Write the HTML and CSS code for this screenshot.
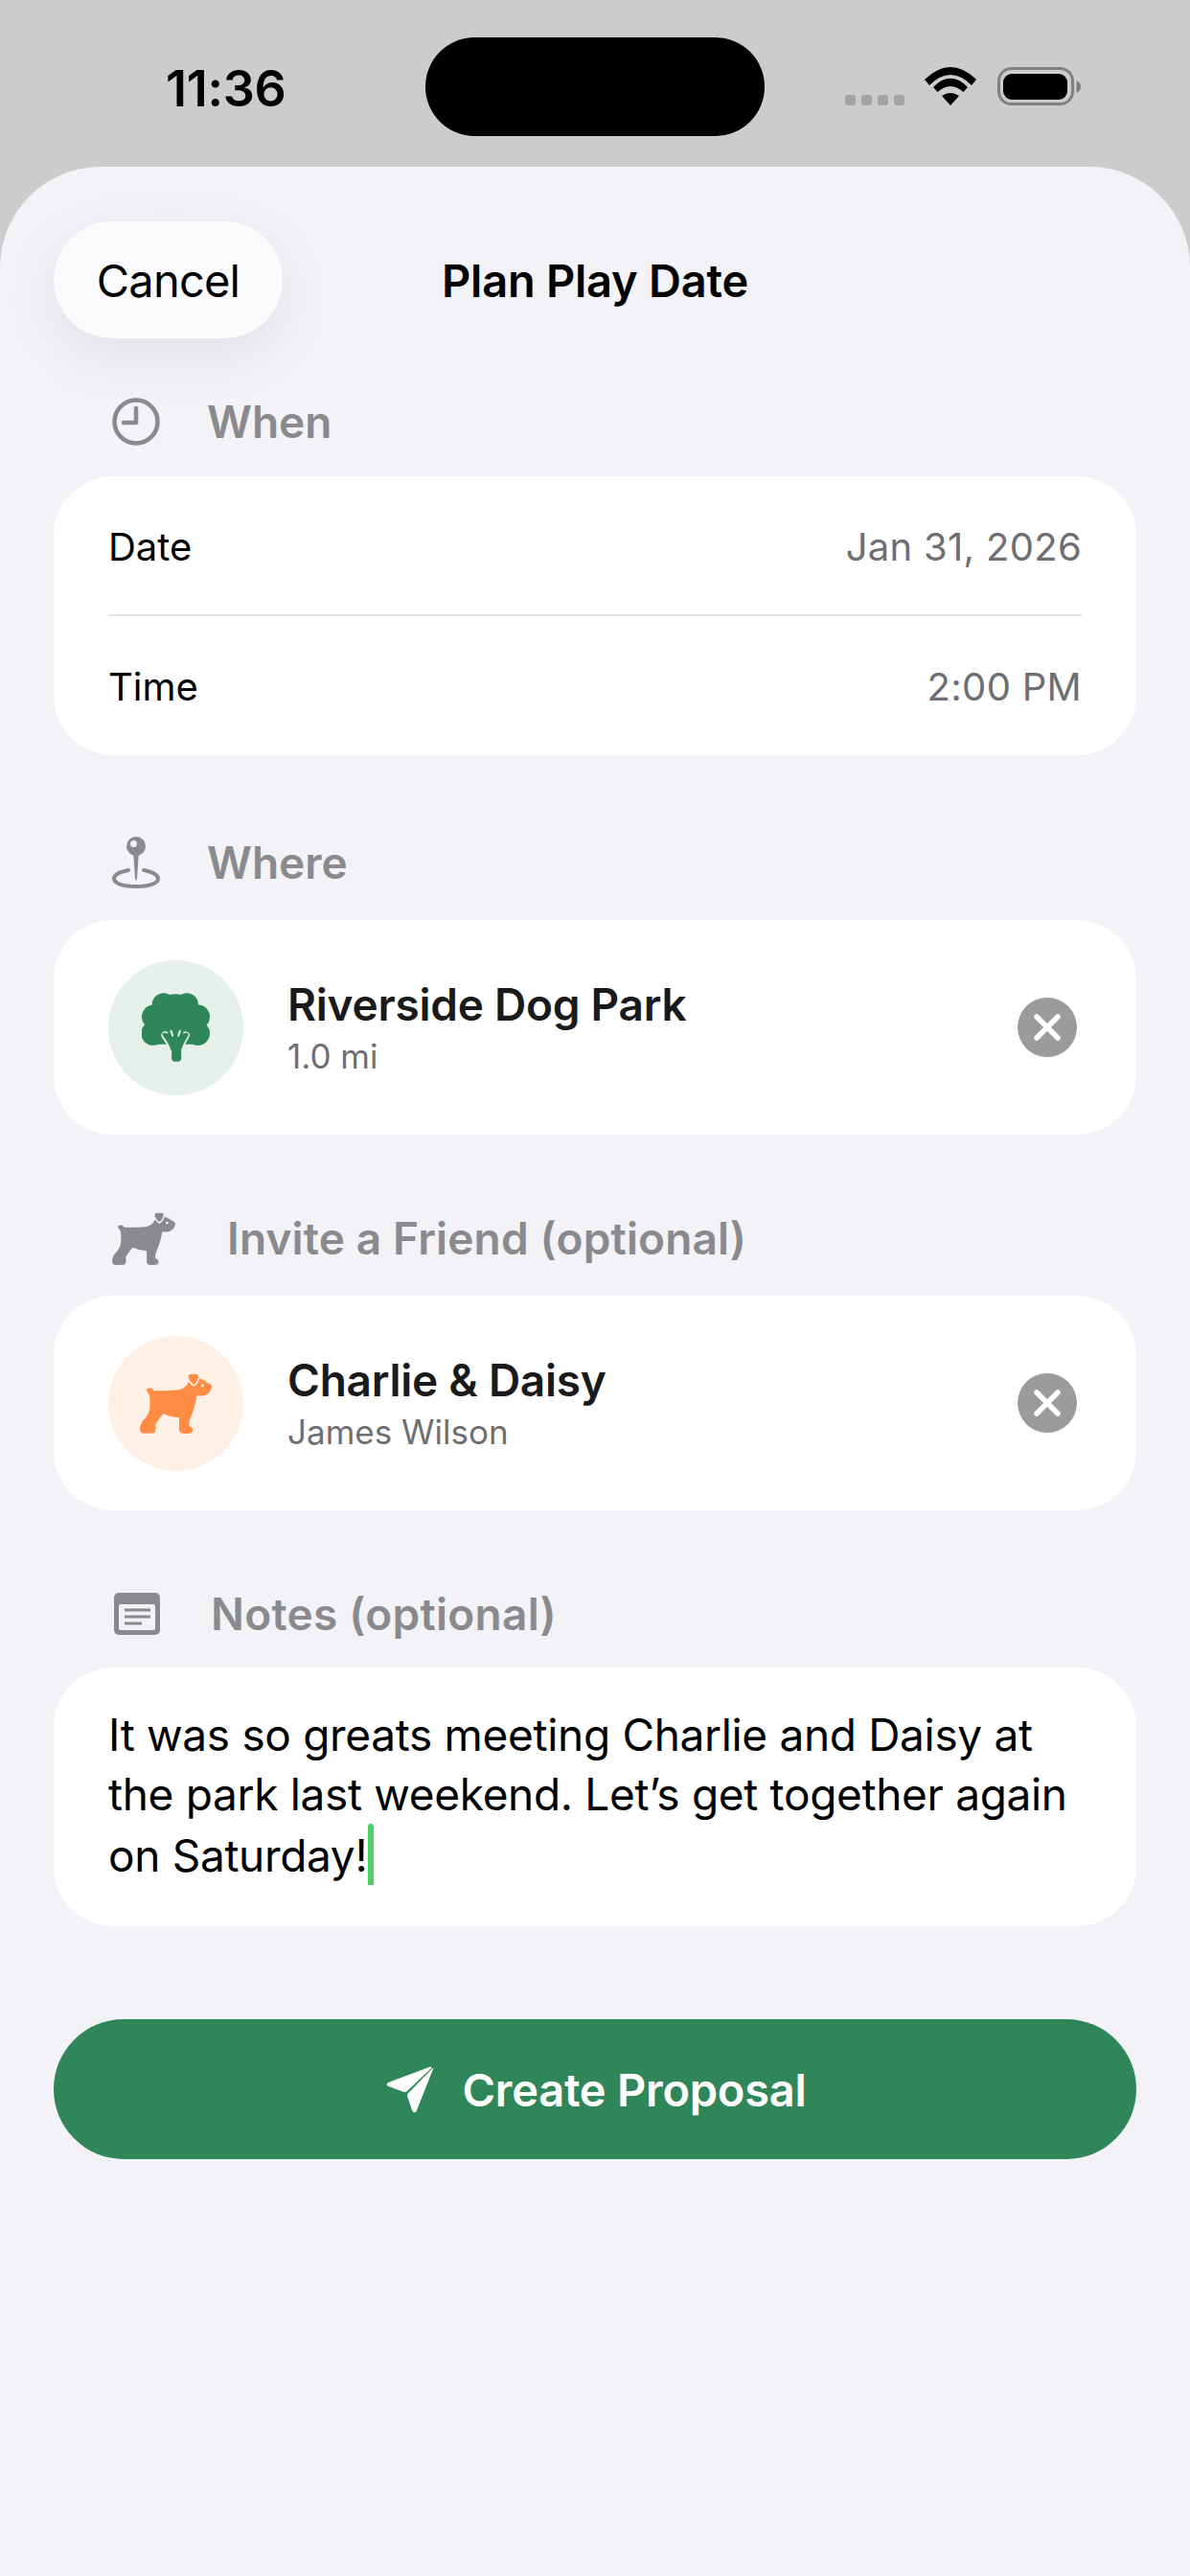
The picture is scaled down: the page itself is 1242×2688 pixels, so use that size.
FILE: index.html
```html
<!DOCTYPE html>
<html lang="en">
<head>
  <meta charset="UTF-8">
  <title>Plan Play Date</title>
  <link rel="stylesheet" href="styles.css">
</head>
<body>
  <svg class="defs" width="0" height="0">
    <!-- dog, drawn once and reused for the heading and the friend avatar -->
    <symbol id="dog" viewBox="197 552 225 188">
      <path fill="currentColor" d="M218 606 Q216 597 228 597 Q238 598 240 606 Q290 606 320 603 Q342 598 350 578 L385 568 Q398 572 410 582 Q424 586 422 596 Q416 620 392 622 L375 622 Q372 650 358 684 Q350 702 350 714 L360 722 Q366 734 358 738 Q345 741 332 740 Q320 738 320 726 L320 690 Q292 688 270 678 Q256 694 245 712 Q250 734 240 739 L208 740 Q196 738 197 724 Q198 708 212 694 Q226 680 228 660 Q230 630 226 618 Z"/>
      <path fill="currentColor" stroke="var(--ear, #fff)" stroke-width="5" d="M355 552 L374 552 Q384 553 382 566 Q378 582 366 590 Q352 582 347 566 Q345 553 355 552 Z"/>
      <circle cx="393" cy="590" r="4.5" fill="var(--ear, #fff)"/>
    </symbol>
    <symbol id="close" viewBox="0 0 62 62">
      <circle cx="31" cy="31" r="31" fill="#9b9b9b"/>
      <path d="M20 20 L42 42 M42 20 L20 42" stroke="#fff" stroke-width="5.5" stroke-linecap="round"/>
    </symbol>
  </svg>

  <div class="status-bar">
    <span class="clock">11:36</span>
    <div class="island"></div>
    <div class="status-icons">
      <div class="signal"><i></i><i></i><i></i><i></i></div>
      <svg class="wifi" width="54" height="40" viewBox="0 0 54 40">
        <path d="M27 40 L18 30 Q27 24 36 30 Z"/>
        <path d="M9 21 L13.500 26 Q27 14 40.500 26 L45 21 Q27 2.500 9 21 Z"/>
        <path d="M0 13 L5 19 Q27 -3 49 19 L54 13 Q27 -13 0 13 Z"/>
      </svg>
      <svg class="battery" width="87" height="40" viewBox="0 0 87 40">
        <rect x="1.500" y="1.500" width="77" height="37" rx="13" fill="none" stroke="#808080" stroke-width="3"/>
        <rect x="6" y="7" width="67" height="27" rx="9" fill="#000"/>
        <path d="M82.500 14 Q87 16 87 20.500 Q87 25 82.500 27 Z" fill="#808080"/>
      </svg>
    </div>
  </div>

  <main class="sheet">
    <header class="sheet-head">
      <button class="cancel">Cancel</button>
      <h1 class="title">Plan Play Date</h1>
      <span></span>
    </header>

    <section class="group group-when">
      <h2 class="group-label">
        <svg width="50" height="50" viewBox="0 0 50 50" fill="none" stroke="#8a8a8e" stroke-width="4.500">
          <circle cx="25" cy="25" r="22.500"/>
          <path d="M25 11 V26 H12" stroke-linecap="round" stroke-linejoin="round"/>
        </svg>
        When
      </h2>
      <div class="card rows">
        <div class="row"><span>Date</span><span class="row-value">Jan 31, 2026</span></div>
        <div class="row"><span>Time</span><span class="row-value">2:00 PM</span></div>
      </div>
    </section>

    <section class="group group-where">
      <h2 class="group-label">
        <svg width="50" height="54" viewBox="0 0 50 54">
          <path d="M17 35 C7 37 2 40 2 44 C2 49 12 52 25 52 C38 52 48 49 48 44 C48 40 43 37 33 35" fill="none" stroke="#8a8a8e" stroke-width="4" stroke-linecap="round"/>
          <path d="M22 14 H28 L26 44 Q25 47 24 44 Z" fill="#8a8a8e"/>
          <circle cx="25" cy="10" r="10" fill="#8a8a8e"/>
          <circle cx="22.500" cy="7.500" r="3.500" fill="#f2f2f7"/>
        </svg>
        Where
      </h2>
      <div class="card item">
        <div class="avatar avatar-green">
          <svg width="71" height="72" viewBox="55 52 212 214">
            <g fill="#2e8659">
              <circle cx="123" cy="88" r="36"/>
              <circle cx="195" cy="88" r="36"/>
              <circle cx="92" cy="126" r="37"/>
              <circle cx="230" cy="126" r="37"/>
              <circle cx="90" cy="178" r="37"/>
              <circle cx="230" cy="178" r="37"/>
              <circle cx="160" cy="130" r="75"/>
              <path d="M105 150 H215 V212 H105 Z"/>
            </g>
            <g fill="none" stroke="#e5f0ea" stroke-linecap="round">
              <path d="M128 184 Q145 205 151 228 M192 184 Q178 205 172 228" stroke-width="24"/>
              <path d="M163 232 V262" stroke-width="42"/>
            </g>
            <g fill="#2e8659">
              <path d="M128 178 H192 L176 224 H148 Z"/>
              <path d="M148 216 H178 V256 Q178 266 163 266 Q148 266 148 256 Z"/>
            </g>
            <path d="M126 182 Q145 205 151 226 M194 182 Q178 205 172 226" fill="none" stroke="#2e8659" stroke-width="13" stroke-linecap="round"/>
            <path d="M146 170 L151 185 M174 170 L169 185" fill="none" stroke="#e5f0ea" stroke-width="6" stroke-linecap="round"/>
          </svg>
        </div>
        <div class="item-text">
          <div class="item-name">Riverside Dog Park</div>
          <div class="item-sub">1.0 mi</div>
        </div>
        <svg class="remove" width="62" height="62"><use href="#close"/></svg>
      </div>
    </section>

    <section class="group">
      <h2 class="group-label group-label-dog">
        <svg class="dog-grey" width="66" height="55"><use href="#dog"/></svg>
        Invite a Friend (optional)
      </h2>
      <div class="card item">
        <div class="avatar avatar-orange">
          <svg class="dog-orange" width="75" height="63"><use href="#dog"/></svg>
        </div>
        <div class="item-text">
          <div class="item-name">Charlie &amp; Daisy</div>
          <div class="item-sub">James Wilson</div>
        </div>
        <svg class="remove" width="62" height="62"><use href="#close"/></svg>
      </div>
    </section>

    <section class="group group-notes">
      <h2 class="group-label group-label-notes">
        <svg width="48" height="44" viewBox="0 0 48 44">
          <rect width="48" height="44" rx="5" fill="#8a8a8e"/>
          <rect x="5" y="12" width="38" height="27" rx="2" fill="#f2f2f7"/>
          <path d="M11 18 H38 M11 25 H38 M11 32 H29" stroke="#8a8a8e" stroke-width="3"/>
        </svg>
        Notes (optional)
      </h2>
      <div class="card notes">It was so greats meeting Charlie and Daisy at the park last weekend. Let’s get together again on Saturday!<span class="caret"></span></div>
    </section>

    <button class="submit">
      <svg width="50" height="49" viewBox="73 85 150 147">
        <path d="M210 87 Q216 86 214 92 L138 164 Q133 168 127 165 L80 148 Q70 143 80 136 Z" fill="#fff"/>
        <path d="M221 92 Q222 88 218 92 L142 170 Q138 175 140 181 L155 225 Q161 235 168 225 Z" fill="#fff"/>
      </svg>
      Create Proposal
    </button>
  </main>
</body>
</html>
```

FILE: styles.css
```css
/* Reset + base */
* { margin:0; padding:0; box-sizing:border-box; }
html, body { height:100%; }
body {
  width:1242px; height:2688px;
  background:#ccc; color:#000;
  font-family:Inter, "Liberation Sans", sans-serif;
  overflow:hidden;
}
.defs { display:block; }

/* Status bar */
.status-bar {
  height:174px;
  padding:39px 0 0 173px;
  display:flex;
  align-items:flex-start;
}
.clock {
  width:271px;
  margin-top:26px;
  font-size:52px; font-weight:600; line-height:56px;
  letter-spacing:-0.3px;
}
.island { width:354px; height:103px; border-radius:52px; background:#000; }
.status-icons {
  margin-left:84px; margin-top:31px;
  display:flex; align-items:flex-start;
}
.signal { display:flex; gap:6.500px; margin-top:29px; margin-right:21px; }
.signal i { width:10.500px; height:11px; border-radius:3px; background:#a3a3a3; }
.wifi { margin-right:22px; }
.battery { display:block; }

/* Sheet */
.sheet {
  height:2514px;
  padding:57px 56px 0;
  background:#f2f2f7;
  border-radius:105px 105px 0 0;
}
.sheet-head {
  display:grid;
  grid-template-columns:1fr auto 1fr;
  align-items:center;
}
.cancel {
  width:239px; height:122px;
  border:none; border-radius:61px;
  background:#fbfbfe;
  box-shadow:0 18px 60px rgba(0,0,0,0.07);
  font:400 47px Inter, "Liberation Sans", sans-serif;
  letter-spacing:-0.8px;
  color:#000;
}
.title { font-size:47px; font-weight:600; white-space:nowrap; letter-spacing:-0.25px; }

/* Groups */
.group { margin-top:80px; }
.group-when { margin-top:59px; }
.group-where { margin-top:84px; }
.group-label {
  height:56px;
  margin-bottom:32px;
  padding-left:61px;
  display:flex; align-items:center; gap:49px;
  font-size:46px; font-weight:600;
  color:#8a8a8e;
}
.group-when .group-label { margin-bottom:29px; }
.group-label-dog { gap:54px; letter-spacing:0.15px; --ear:#f2f2f7; }
.group-label-notes { gap:53px; padding-left:63px; letter-spacing:0.25px; }
.group-notes .group-label { margin-bottom:28px; }

.card { background:#fff; border-radius:62px; }

/* Date + time rows */
.rows { padding:0 57px; }
.row {
  height:147px;
  padding-top:2px;
  display:flex; justify-content:space-between; align-items:center;
  font-size:40px;
}
.row:first-child { height:144px; padding-top:3px; }
.row + .row { border-top:2px solid #e2e2e4; }
.row-value { color:#6e6e73; letter-spacing:0.3px; }

/* Place + friend cards */
.item {
  height:224px;
  padding:0 62px 0 57px;
  display:flex; align-items:center;
}
.avatar {
  width:141px; height:141px;
  border-radius:50%;
  display:flex; align-items:center; justify-content:center;
}
.avatar-green { background:#e5f0ea; }
.avatar-orange { background:#fff0e6; color:#ff8c42; --ear:#fff0e6; }
.item-text { flex:1; margin-left:46px; }
.item-name { font-size:46px; font-weight:600; color:#1a1a1a; line-height:56px; letter-spacing:-0.25px; }
.item-sub { margin-top:3px; font-size:35px; color:#6e6e73; line-height:46px; }
.dog-grey { color:#8a8a8e; }

/* Notes */
.notes {
  height:270px;
  padding:39px 57px 0;
  font-size:46px; line-height:62px;
  letter-spacing:-0.33px;
}
.caret {
  display:inline-block;
  width:6px; height:64px;
  margin-left:1px;
  vertical-align:-14px;
  border-radius:3px 3px 0 0;
  background:#4cd264;
}

/* Submit */
.submit {
  width:100%; height:146px;
  margin-top:97px;
  padding-left:3px;
  border:none; border-radius:73px;
  background:#2e8659;
  color:#fff;
  font:600 47px Inter, "Liberation Sans", sans-serif;
  letter-spacing:-0.25px;
  display:flex; align-items:center; justify-content:center; gap:29px;
}
```
